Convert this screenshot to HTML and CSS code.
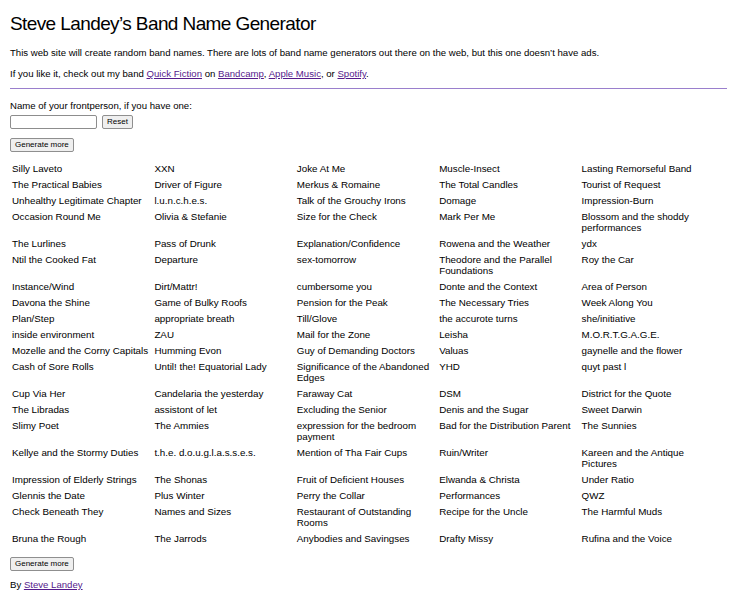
FILE: index.html
```html
<!DOCTYPE html>
<html lang="en">
<head>
<meta charset="utf-8">
<title>Steve Landey’s Band Name Generator</title>
<link rel="stylesheet" href="styles.css">
</head>
<body>
<h1 class="title">Steve Landey’s Band Name Generator</h1>
<p class="intro">This web site will create random band names. There are lots of band name generators out there on the web, but this one doesn’t have ads.</p>
<p class="intro">If you like it, check out my band <a href="#">Quick Fiction</a> on <a href="#">Bandcamp</a>, <a href="#">Apple Music</a>, or <a href="#">Spotify</a>.</p>
<hr class="rule">
<div class="form">
  <label class="label" for="fp">Name of your frontperson, if you have one:</label>
  <div class="row">
    <input class="field" id="fp" type="text">
    <button class="btn" type="button">Reset</button>
  </div>
  <div class="row gen">
    <button class="btn" type="button">Generate more</button>
  </div>
</div>
<table class="names">
<tr><td>Silly Laveto</td><td>XXN</td><td>Joke At Me</td><td>Muscle-Insect</td><td>Lasting Remorseful Band</td></tr>
<tr><td>The Practical Babies</td><td>Driver of Figure</td><td>Merkus &amp; Romaine</td><td>The Total Candles</td><td>Tourist of Request</td></tr>
<tr><td>Unhealthy Legitimate Chapter</td><td>l.u.n.c.h.e.s.</td><td>Talk of the Grouchy Irons</td><td>Domage</td><td>Impression-Burn</td></tr>
<tr><td>Occasion Round Me</td><td>Olivia &amp; Stefanie</td><td>Size for the Check</td><td>Mark Per Me</td><td>Blossom and the shoddy performances</td></tr>
<tr><td>The Lurlines</td><td>Pass of Drunk</td><td>Explanation/Confidence</td><td>Rowena and the Weather</td><td>ydx</td></tr>
<tr><td>Ntil the Cooked Fat</td><td>Departure</td><td>sex-tomorrow</td><td>Theodore and the Parallel Foundations</td><td>Roy the Car</td></tr>
<tr><td>Instance/Wind</td><td>Dirt/Mattr!</td><td>cumbersome you</td><td>Donte and the Context</td><td>Area of Person</td></tr>
<tr><td>Davona the Shine</td><td>Game of Bulky Roofs</td><td>Pension for the Peak</td><td>The Necessary Tries</td><td>Week Along You</td></tr>
<tr><td>Plan/Step</td><td>appropriate breath</td><td>Till/Glove</td><td>the accurote turns</td><td>she/initiative</td></tr>
<tr><td>inside environment</td><td>ZAU</td><td>Mail for the Zone</td><td>Leisha</td><td>M.O.R.T.G.A.G.E.</td></tr>
<tr><td>Mozelle and the Corny Capitals</td><td>Humming Evon</td><td>Guy of Demanding Doctors</td><td>Valuas</td><td>gaynelle and the flower</td></tr>
<tr><td>Cash of Sore Rolls</td><td>Until! the! Equatorial Lady</td><td>Significance of the Abandoned Edges</td><td>YHD</td><td>quyt past l</td></tr>
<tr><td>Cup Via Her</td><td>Candelaria the yesterday</td><td>Faraway Cat</td><td>DSM</td><td>District for the Quote</td></tr>
<tr><td>The Libradas</td><td>assistont of let</td><td>Excluding the Senior</td><td>Denis and the Sugar</td><td>Sweet Darwin</td></tr>
<tr><td>Slimy Poet</td><td>The Ammies</td><td>expression for the bedroom payment</td><td>Bad for the Distribution Parent</td><td>The Sunnies</td></tr>
<tr><td>Kellye and the Stormy Duties</td><td>t.h.e. d.o.u.g.l.a.s.s.e.s.</td><td>Mention of Tha Fair Cups</td><td>Ruin/Writer</td><td>Kareen and the Antique Pictures</td></tr>
<tr><td>Impression of Elderly Strings</td><td>The Shonas</td><td>Fruit of Deficient Houses</td><td>Elwanda &amp; Christa</td><td>Under Ratio</td></tr>
<tr><td>Glennis the Date</td><td>Plus Winter</td><td>Perry the Collar</td><td>Performances</td><td>QWZ</td></tr>
<tr><td>Check Beneath They</td><td>Names and Sizes</td><td>Restaurant of Outstanding Rooms</td><td>Recipe for the Uncle</td><td>The Harmful Muds</td></tr>
<tr><td>Bruna the Rough</td><td>The Jarrods</td><td>Anybodies and Savingses</td><td>Drafty Missy</td><td>Rufina and the Voice</td></tr>
</table>
<div class="row bottom">
  <button class="btn" type="button">Generate more</button>
</div>
<p class="byline">By <a href="#">Steve Landey</a></p>
</body>
</html>
```

FILE: styles.css
```css
html, body {
  background: #ffffff;
}
body {
  margin: 0;
  padding: 0 10px;
  font-family: "Liberation Sans", Arial, sans-serif;
  font-size: 9.6px;
  color: #000000;
}
a {
  color: #551a8b;
  text-decoration: underline;
}
.title {
  margin: 12px 0 10px;
  font-size: 19px;
  letter-spacing: -0.6px;
  line-height: 24px;
  font-weight: normal;
}
.intro {
  margin: 0 0 7px;
  line-height: 14px;
}
.rule {
  margin: 2px 0 10px;
  border: 0;
  border-top: 1px solid #9a7fcd;
  height: 0;
}
.form {
  display: flex;
  flex-direction: column;
}
.label {
  line-height: 14px;
}
.row {
  display: flex;
  align-items: center;
  gap: 5px;
  margin-top: 2px;
}
.row.gen {
  margin-top: 9px;
}
.field {
  box-sizing: border-box;
  width: 87px;
  height: 14px;
  margin: 0;
  padding: 0 2px;
  border: 1px solid #8d8d8d;
  border-radius: 2px;
  background: #ffffff;
  font-size: 8px;
}
.btn {
  box-sizing: border-box;
  height: 14px;
  margin: 0;
  padding: 0 4px;
  border: 1px solid #8f8f8f;
  border-radius: 2px;
  background: #efefef;
  font-family: "Liberation Sans", Arial, sans-serif;
  font-size: 8px;
  line-height: 12px;
  color: #000000;
}
.names {
  table-layout: fixed;
  width: 712px;
  border-collapse: collapse;
  margin-top: 9px;
}
.names td {
  vertical-align: top;
  padding: 2px 2px 3px;
  font-size: 9.8px;
  line-height: 11px;
}
.row.bottom {
  margin-top: 10px;
}
.byline {
  margin: 7px 0 0;
  line-height: 14px;
}
```
